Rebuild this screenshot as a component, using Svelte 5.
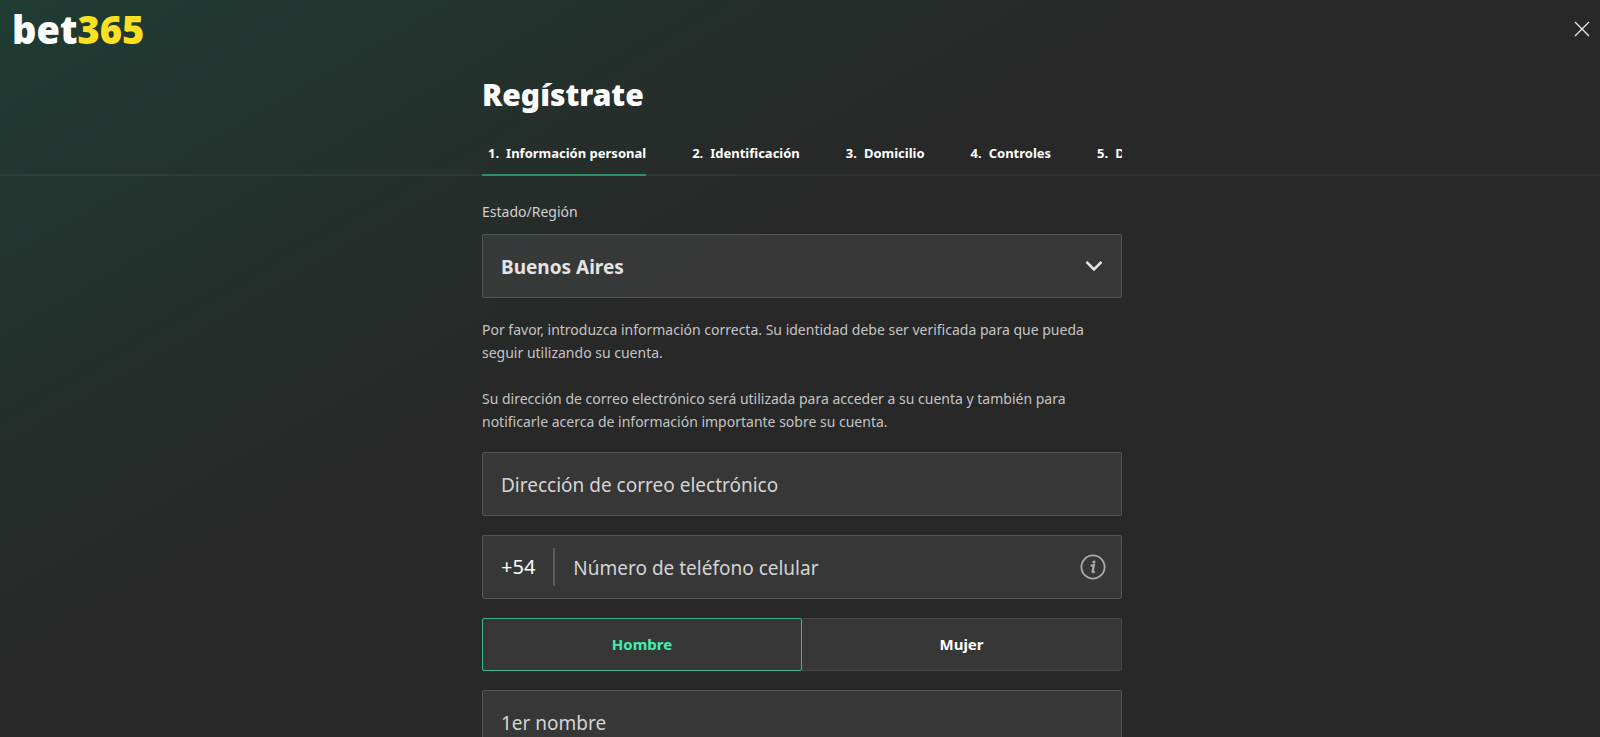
<script lang="ts">
  let region = $state('Buenos Aires');
  let gender = $state('hombre');
  let email = $state('');
  let phone = $state('');
  let firstName = $state('');
  let currentStep = $state(0);

  const regions = ['Buenos Aires', 'Catamarca', 'Córdoba', 'Mendoza', 'Santa Fe'];

  const steps = [
    'Información personal',
    'Identificación',
    'Domicilio',
    'Controles',
    'Depósito'
  ];

  const genders = [
    { value: 'hombre', label: 'Hombre' },
    { value: 'mujer', label: 'Mujer' }
  ];
</script>

<div class="page">
  <header class="top-bar">
    <a class="logo" href="/">bet<span>365</span></a>
    <button class="close" type="button" aria-label="Cerrar">
      <svg width="16" height="16" viewBox="0 0 16 16" fill="none" stroke="currentColor">
        <path d="M1 1L15 15M15 1L1 15" stroke-width="1.4" />
      </svg>
    </button>
  </header>

  <div class="heading">
    <div class="column">
      <h1>Regístrate</h1>
      <nav class="steps">
        {#each steps as step, i}
          <a
            class="step"
            class:active={i === currentStep}
            href="#paso-{i + 1}"
            onclick={() => (currentStep = i)}
          >
            <span>{i + 1}.</span>
            <span>{step}</span>
          </a>
        {/each}
      </nav>
    </div>
  </div>

  <form class="column form">
    <label class="field-label" for="region">Estado/Región</label>
    <div class="field select-field">
      <select id="region" bind:value={region}>
        {#each regions as name}
          <option value={name}>{name}</option>
        {/each}
      </select>
      <svg class="chevron" width="18" height="12" viewBox="0 0 18 12" fill="none">
        <path d="M1.5 1.8L9 9.3L16.5 1.8" stroke="#e4e4e4" stroke-width="2.6" />
      </svg>
    </div>

    <div class="notes">
      <p>
        Por favor, introduzca información correcta. Su identidad debe ser verificada para que pueda
        seguir utilizando su cuenta.
      </p>
      <p>
        Su dirección de correo electrónico será utilizada para acceder a su cuenta y también para
        notificarle acerca de información importante sobre su cuenta.
      </p>
    </div>

    <div class="fields">
      <div class="field">
        <input
          type="email"
          aria-label="Dirección de correo electrónico"
          placeholder="Dirección de correo electrónico"
          bind:value={email}
        />
      </div>

      <div class="field">
        <span class="prefix">+54</span>
        <input
          type="tel"
          aria-label="Número de teléfono celular"
          placeholder="Número de teléfono celular"
          bind:value={phone}
        />
        <button class="info" type="button" aria-label="Más información">
          <svg width="26" height="26" viewBox="0 0 26 26" fill="none">
            <circle cx="13" cy="13" r="11.6" stroke="currentColor" stroke-width="1.8" />
            <circle cx="14" cy="8" r="1.6" fill="currentColor" />
            <path
              d="M10.6 11.7C11.8 11.4 13 11.1 13.9 11.1L12.6 17.2C12.4 18.4 13.3 18.3 14.8 17.4"
              stroke="currentColor"
              stroke-width="2.2"
            />
          </svg>
        </button>
      </div>

      <div class="genders" role="radiogroup" aria-label="Género">
        {#each genders as option}
          <label class="gender" class:selected={gender === option.value}>
            <input type="radio" name="gender" value={option.value} bind:group={gender} />
            {option.label}
          </label>
        {/each}
      </div>

      <div class="field">
        <input
          type="text"
          aria-label="1er nombre"
          placeholder="1er nombre"
          bind:value={firstName}
        />
      </div>
    </div>
  </form>
</div>

<style>
  :global(body) {
    margin: 0;
    background: #282828;
  }

  .page {
    box-sizing: border-box;
    min-height: 100vh;
    background: linear-gradient(150deg, #1f3c33 0, #282828 580px);
    color: #fff;
    font-family: "Noto Sans", "Open Sans", sans-serif;
  }

  .top-bar {
    display: flex;
    justify-content: space-between;
    align-items: center;
    height: 58px;
    padding: 0 10px 0 12px;
  }

  .logo {
    color: #fff;
    font-size: 38px;
    font-weight: 900;
    line-height: 56px;
    text-decoration: none;
  }

  .logo span {
    color: #fbe122;
  }

  .close,
  .info {
    display: flex;
    padding: 0;
    border: none;
    background: none;
    color: #e4e4e4;
    cursor: pointer;
  }

  .column {
    box-sizing: border-box;
    max-width: 644px;
    margin: 0 auto;
    padding-left: 4px;
  }

  .heading {
    border-bottom: 2px solid rgba(255, 255, 255, 0.05);
  }

  h1 {
    margin: 0;
    padding-top: 15px;
    font-size: 30px;
    font-weight: 900;
    line-height: 44px;
  }

  .steps {
    display: flex;
    gap: 40px;
    margin-bottom: -2px;
    padding-top: 15px;
    overflow: hidden;
  }

  .step {
    display: flex;
    flex-shrink: 0;
    gap: 7px;
    padding: 11px 0 11px 6px;
    border-bottom: 2px solid transparent;
    color: #fff;
    font-size: 13px;
    font-weight: 700;
    line-height: 20px;
    text-decoration: none;
  }

  .step.active {
    border-color: #2f8c6c;
  }

  .form {
    padding-top: 24px;
    padding-bottom: 40px;
  }

  .field-label {
    display: block;
    padding-bottom: 11px;
    color: #d0d0d0;
    font-size: 14px;
    line-height: 23px;
  }

  .field {
    box-sizing: border-box;
    display: flex;
    align-items: center;
    height: 64px;
    border: 1px solid #555;
    border-radius: 2px;
    background: rgba(255, 255, 255, 0.07);
  }

  .field input,
  .select-field select {
    flex: 1;
    min-width: 0;
    height: 100%;
    padding: 2px 18px 0;
    border: none;
    outline: none;
    background: transparent;
    color: #fff;
    font-family: inherit;
    font-size: 19px;
  }

  .field input::placeholder {
    color: #d4d4d4;
    opacity: 1;
  }

  .select-field {
    display: grid;
    grid-template-columns: 1fr 36px;
  }

  .select-field select {
    grid-area: 1 / 1 / 2 / 3;
    appearance: none;
    color: #e4e4e4;
    font-weight: 700;
    cursor: pointer;
  }

  .select-field option {
    background: #383838;
  }

  .chevron {
    grid-area: 1 / 2;
    pointer-events: none;
  }

  .notes {
    padding: 20px 0 19px;
    color: #c4c4c4;
    font-size: 14px;
    line-height: 23px;
  }

  .notes p {
    margin: 0;
  }

  .notes p + p {
    margin-top: 23px;
  }

  .fields {
    display: flex;
    flex-direction: column;
    gap: 19px;
  }

  .field input,
  .gender {
    box-sizing: border-box;
  }

  .prefix {
    padding: 0 18px;
    border-right: 2px solid #5a5a5a;
    font-size: 20px;
    line-height: 38px;
  }

  .info {
    margin-right: 15px;
    color: #aaa;
  }

  .genders {
    display: grid;
    grid-template-columns: 1fr 1fr;
  }

  .gender {
    height: 53px;
    border: 1px solid #484848;
    border-left: none;
    border-radius: 0 2px 2px 0;
    background: rgba(255, 255, 255, 0.07);
    font-size: 15px;
    font-weight: 700;
    line-height: 51px;
    text-align: center;
    cursor: pointer;
  }

  .gender input {
    position: absolute;
    opacity: 0;
    pointer-events: none;
  }

  .gender.selected {
    border: 1px solid #3fb98e;
    border-radius: 2px;
    color: #3ff0b0;
  }
</style>
